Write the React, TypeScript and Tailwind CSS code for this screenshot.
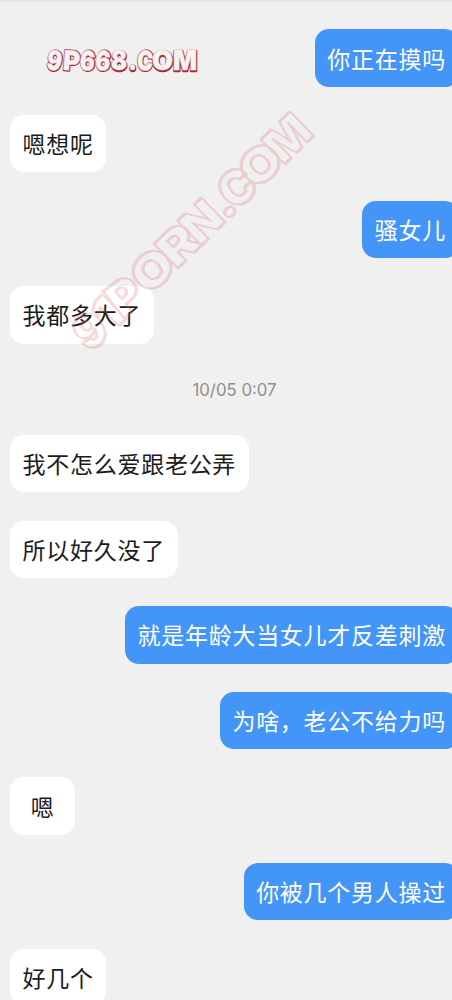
type Message = {
  text: string;
  mine?: boolean;
};

type Glyph = {
  char: string;
  x: number;
  width: number;
  tilt?: number;
};

const earlier: Message[] = [
  { text: "你正在摸吗", mine: true },
  { text: "嗯想呢" },
  { text: "骚女儿", mine: true },
  { text: "我都多大了" },
];

const later: Message[] = [
  { text: "我不怎么爱跟老公弄" },
  { text: "所以好久没了" },
  { text: "就是年龄大当女儿才反差刺激", mine: true },
  { text: "为啥，老公不给力吗", mine: true },
  { text: "嗯" },
  { text: "你被几个男人操过", mine: true },
  { text: "好几个" },
];

const smallMark: Glyph[] = [
  { char: "9", x: 8.5, width: 15, tilt: 10 },
  { char: "P", x: 25.5, width: 17, tilt: 4 },
  { char: "6", x: 41.5, width: 15, tilt: 6 },
  { char: "6", x: 57, width: 15, tilt: 6 },
  { char: "8", x: 73, width: 16 },
  { char: ".", x: 86.5, width: 9 },
  { char: "C", x: 99, width: 16, tilt: 4 },
  { char: "O", x: 116.5, width: 21 },
  { char: "M", x: 139, width: 24 },
];

const largeMark: Glyph[] = [
  { char: "9", x: 1, width: 30, tilt: 12 },
  { char: "1", x: 26, width: 23 },
  { char: "P", x: 50, width: 33, tilt: 6 },
  { char: "O", x: 88, width: 42 },
  { char: "R", x: 124, width: 38 },
  { char: "N", x: 157, width: 38 },
  { char: ".", x: 184, width: 20 },
  { char: "C", x: 206, width: 35, tilt: 6 },
  { char: "O", x: 239, width: 42 },
  { char: "M", x: 277, width: 45 },
];

function Letters({ glyphs, size }: { glyphs: Glyph[]; size: number }) {
  return (
    <>
      {glyphs.map((glyph, index) => (
        <text
          key={index}
          x={glyph.x - glyph.width / 2}
          y={0}
          fontSize={size}
          textLength={glyph.width}
          lengthAdjust="spacingAndGlyphs"
          transform={`rotate(${glyph.tilt ?? 0} ${glyph.x} ${-size / 3})`}
        >
          {glyph.char}
        </text>
      ))}
    </>
  );
}

function Bubble({ text, mine }: Message) {
  return (
    <div
      className={`flex h-[57.5px] min-w-[65px] shrink-0 items-center justify-center whitespace-nowrap rounded-[14px] px-[12.6px] text-[23px] leading-none tracking-[0.72px] ${
        mine
          ? "-mr-[6.5px] self-end bg-[#4395f8] text-white"
          : "ml-[10px] self-start bg-white text-[#191b1d]"
      }`}
    >
      <span>{text}</span>
    </div>
  );
}

export default function App() {
  return (
    <main className="relative flex h-[1000px] w-[452px] flex-col overflow-hidden border-t-2 border-[#e6e6e6] bg-[#f0f0f0] pt-[27.4px] font-['Noto_Sans_CJK_SC',sans-serif]">
      <section className="flex shrink-0 flex-col gap-[28.1px]">
        {earlier.map((message) => (
          <Bubble key={message.text} {...message} />
        ))}
      </section>

      <time className="flex h-[91.3px] shrink-0 items-center justify-center pl-[17px] pt-[3px] font-['Inter',sans-serif] text-[16.8px] text-[#8f8f8f]">
        10/05 0:07
      </time>

      <section className="flex shrink-0 flex-col gap-[28.1px]">
        {later.map((message) => (
          <Bubble key={message.text} {...message} />
        ))}
      </section>

      <svg
        viewBox="0 2 452 420"
        className="pointer-events-none absolute left-0 top-0 h-[420px] w-[452px] font-['Inter',sans-serif] font-black"
        strokeLinejoin="round"
      >
        <g transform="translate(46 70.5)">
          <g fill="#ac2733" stroke="#ac2733" strokeWidth={2.4} transform="translate(.3 .2)">
            <Letters glyphs={smallMark} size={27} />
          </g>
          <g fill="#f5f2f2" stroke="#f5f2f2" strokeWidth={0.4} transform="translate(0 -.2)">
            <Letters glyphs={smallMark} size={27} />
          </g>
        </g>

        <g
          transform="translate(100 343) rotate(-44.3)"
          fill="none"
          stroke="#df777d"
          strokeWidth={1.2}
          opacity={0.28}
        >
          <Letters glyphs={largeMark} size={47} />
          <g transform="translate(0.4 1)">
            <Letters glyphs={largeMark} size={47} />
          </g>
          <g transform="translate(0.8 2)">
            <Letters glyphs={largeMark} size={47} />
          </g>
        </g>
      </svg>
    </main>
  );
}
